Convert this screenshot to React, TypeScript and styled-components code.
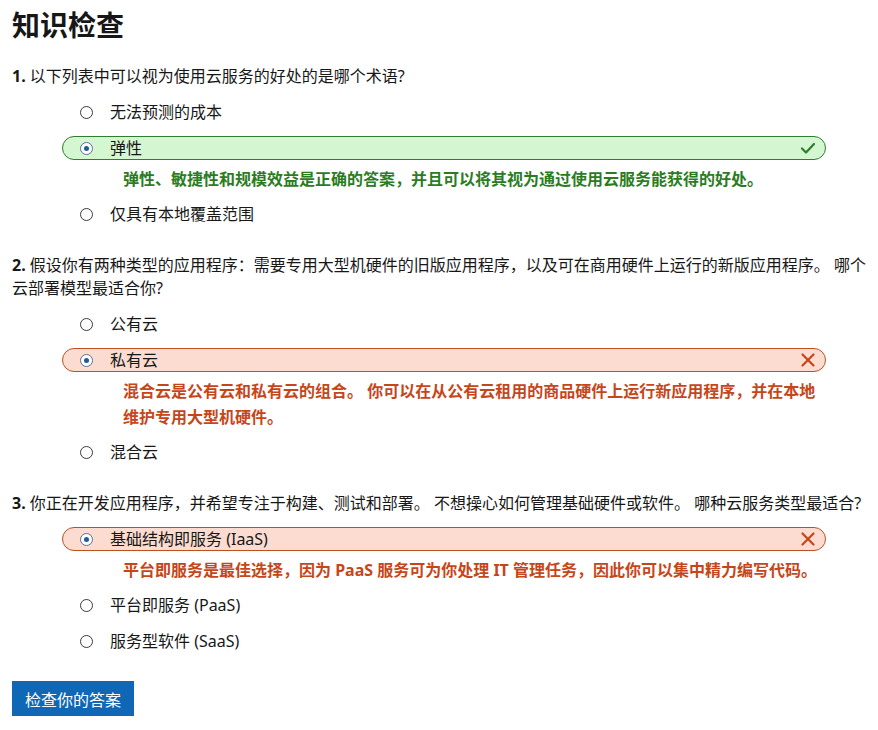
import React from 'react'
import styled, { createGlobalStyle, css } from 'styled-components'

const GlobalStyle = createGlobalStyle`
  html, body {
    margin: 0;
    padding: 0;
    background: #ffffff;
  }
  body {
    font-family: 'Noto Sans', 'Noto Sans CJK SC', sans-serif;
    color: #171717;
  }
`

type Tone = 'none' | 'correct' | 'wrong'

const Page = styled.div`
  padding: 0 12px 20px;
  display: flex;
  flex-direction: column;
`

const Title = styled.h1`
  margin: 6px 0 0;
  font-size: 28px;
  line-height: 36px;
  font-weight: 700;
  font-family: 'Noto Sans CJK SC', sans-serif;
`

const QuestionBlock = styled.section`
  margin-top: 16px;

  &:first-of-type {
    margin-top: 23px;
  }
`

const QuestionText = styled.p`
  margin: 0;
  font-size: 16px;
  line-height: 23px;

  b {
    font-weight: 700;
  }
`

const OptionList = styled.div`
  margin: 12px 40px 0 50px;
  display: flex;
  flex-direction: column;
`

const toneColors = {
  correct: { bg: '#d4f6d1', border: '#2f7d2f', text: '#2b7c1f' },
  wrong: { bg: '#fcdcd0', border: '#b9521f', text: '#c6461a' },
}

const OptionRow = styled.label<{ $tone: Tone }>`
  box-sizing: border-box;
  display: flex;
  align-items: center;
  gap: 17px;
  height: 24px;
  padding: 0 9px 0 17px;
  border: 1px solid transparent;
  border-radius: 12px;
  font-size: 16px;
  margin-bottom: 12px;

  ${(p) =>
    p.$tone !== 'none' &&
    css`
      background: ${toneColors[p.$tone].bg};
      border-color: ${toneColors[p.$tone].border};
      margin-bottom: 0;
    `}
`

const Radio = styled.span<{ $checked?: boolean }>`
  flex: none;
  width: 13px;
  height: 13px;
  box-sizing: border-box;
  border-radius: 50%;
  border: 1.5px solid ${(p) => (p.$checked ? '#5a6f96' : '#3a3a3a')};
  background: #ffffff;
  display: flex;
  align-items: center;
  justify-content: center;

  &::after {
    content: '';
    display: ${(p) => (p.$checked ? 'block' : 'none')};
    width: 5px;
    height: 5px;
    border-radius: 50%;
    background: #1d5a9e;
  }
`

const OptionLabel = styled.span`
  flex: 1;
  line-height: 22px;
`

const StatusIcon = styled.svg`
  flex: none;
  width: 16px;
  height: 16px;
`

const Feedback = styled.p<{ $tone: 'correct' | 'wrong' }>`
  margin: 6px 0 10px;
  padding-left: 61px;
  font-size: 16px;
  line-height: 26px;
  font-weight: 700;
  color: ${(p) => toneColors[p.$tone].text};
`

const CheckButton = styled.button`
  align-self: flex-start;
  margin-top: 16px;
  height: 35px;
  padding: 0 13px;
  border: none;
  background: #0f67b5;
  color: #ffffff;
  font-size: 16px;
  font-family: 'Noto Sans CJK SC', sans-serif;
  cursor: pointer;
`

function CheckIcon() {
  return (
    <StatusIcon viewBox='0 0 16 16'>
      <polyline points='2,8.5 6,12.5 14,4' fill='none' stroke='#2f7d2f' strokeWidth='2.2' strokeLinecap='round' strokeLinejoin='round' />
    </StatusIcon>
  )
}

function CrossIcon() {
  return (
    <StatusIcon viewBox='0 0 16 16'>
      <path d='M2.5 2.5 L13.5 13.5 M13.5 2.5 L2.5 13.5' stroke='#c6461a' strokeWidth='2.2' strokeLinecap='round' />
    </StatusIcon>
  )
}

type Option = { label: string; checked?: boolean; tone?: Tone; feedback?: string }
type Question = { num: number; text: string; options: Option[] }

const questions: Question[] = [
  {
    num: 1,
    text: '以下列表中可以视为使用云服务的好处的是哪个术语?',
    options: [
      { label: '无法预测的成本' },
      {
        label: '弹性',
        checked: true,
        tone: 'correct',
        feedback: '弹性、敏捷性和规模效益是正确的答案，并且可以将其视为通过使用云服务能获得的好处。',
      },
      { label: '仅具有本地覆盖范围' },
    ],
  },
  {
    num: 2,
    text: '假设你有两种类型的应用程序：需要专用大型机硬件的旧版应用程序，以及可在商用硬件上运行的新版应用程序。 哪个云部署模型最适合你?',
    options: [
      { label: '公有云' },
      {
        label: '私有云',
        checked: true,
        tone: 'wrong',
        feedback: '混合云是公有云和私有云的组合。 你可以在从公有云租用的商品硬件上运行新应用程序，并在本地维护专用大型机硬件。',
      },
      { label: '混合云' },
    ],
  },
  {
    num: 3,
    text: '你正在开发应用程序，并希望专注于构建、测试和部署。 不想操心如何管理基础硬件或软件。 哪种云服务类型最适合?',
    options: [
      {
        label: '基础结构即服务 (IaaS)',
        checked: true,
        tone: 'wrong',
        feedback: '平台即服务是最佳选择，因为 PaaS 服务可为你处理 IT 管理任务，因此你可以集中精力编写代码。',
      },
      { label: '平台即服务 (PaaS)' },
      { label: '服务型软件 (SaaS)' },
    ],
  },
]

export default function App() {
  return (
    <>
      <GlobalStyle />
      <Page>
        <Title>知识检查</Title>
        {questions.map((q) => (
          <QuestionBlock key={q.num}>
            <QuestionText>
              <b>{q.num}.</b> {q.text}
            </QuestionText>
            <OptionList>
              {q.options.map((o) => {
                const tone = o.tone ?? 'none'
                return (
                  <React.Fragment key={o.label}>
                    <OptionRow $tone={tone}>
                      <Radio $checked={o.checked} />
                      <OptionLabel>{o.label}</OptionLabel>
                      {tone === 'correct' && <CheckIcon />}
                      {tone === 'wrong' && <CrossIcon />}
                    </OptionRow>
                    {o.feedback && tone !== 'none' && <Feedback $tone={tone}>{o.feedback}</Feedback>}
                  </React.Fragment>
                )
              })}
            </OptionList>
          </QuestionBlock>
        ))}
        <CheckButton>检查你的答案</CheckButton>
      </Page>
    </>
  )
}
